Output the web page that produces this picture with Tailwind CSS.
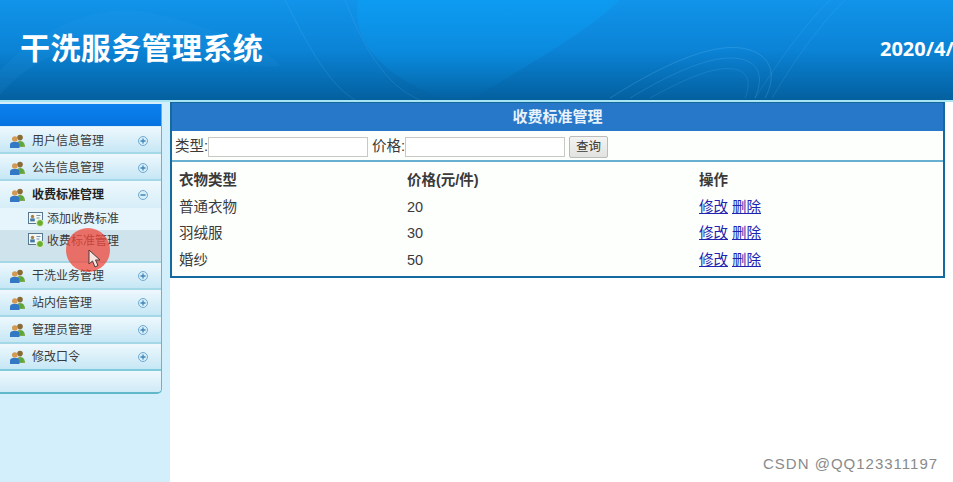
<!DOCTYPE html>
<html lang="zh-CN">
<head>
  <meta charset="UTF-8">
  <title>干洗服务管理系统</title>
  <script src="https://cdn.jsdelivr.net/npm/@tailwindcss/browser@4"></script>
</head>
<body class="relative w-[953px] h-[482px] overflow-hidden bg-white font-['Liberation_Sans','Noto_Sans_CJK_SC',sans-serif] text-[#3a3a3a]">

  <!-- Header -->
  <header class="relative h-[102px] border-b-2 border-[#a8e4f2] bg-gradient-to-b from-[#1194ea] via-[#0b83d6] to-[#04609f] overflow-hidden">
    <svg class="absolute inset-0" width="953" height="100" fill="none">
      <defs>
        <linearGradient id="glow" x1="0" y1="0" x2="0" y2="1"><stop offset="0" stop-color="#09a0f5" stop-opacity=".55"/><stop offset="1" stop-color="#09a0f5" stop-opacity="0"/></linearGradient>
      </defs>
      <path d="M358 0 L 620 0 C 590 30 520 70 470 100 L 445 100 C 395 80 350 50 358 0 Z" fill="url(#glow)"/>
      <path d="M0 70 C 50 20 110 0 160 15 C 220 30 270 50 280 66 C 240 70 170 50 120 45 C 70 42 30 60 0 95 Z" fill="#3aa9ee" opacity=".1"/>
      <path d="M285 0 C 310 50 330 85 355 100" stroke="#7cc8f5" stroke-opacity=".16"/>
      <path d="M345 0 C 365 50 385 85 420 100" stroke="#7cc8f5" stroke-opacity=".14"/>
      <path d="M610 98 C 670 60 720 40 750 50 C 775 58 775 80 765 98" stroke="#7cc8f5" stroke-opacity=".22"/>
      <path d="M630 98 C 680 68 720 52 745 60 C 762 66 762 82 755 98" stroke="#7cc8f5" stroke-opacity=".18"/>
      <path d="M650 98 C 690 76 720 64 738 70 C 750 74 750 86 745 98" stroke="#7cc8f5" stroke-opacity=".15"/>
      <path d="M755 98 C 780 60 800 30 830 0" stroke="#7cc8f5" stroke-opacity=".14"/>
      <path d="M772 98 C 795 60 815 30 845 0" stroke="#7cc8f5" stroke-opacity=".14"/>
    </svg>
    <div class="relative flex items-center justify-between h-[100px] pb-[3px] pl-[20px]">
      <h1 class="text-[30px] font-bold leading-none tracking-[0.4px] text-white">干洗服务管理系统</h1>
      <span class="w-[73px] overflow-hidden whitespace-nowrap font-['Open_Sans'] text-[20px] font-bold text-white">2020/4/</span>
    </div>
  </header>

  <div class="flex h-[380px]">
    <!-- Sidebar -->
    <aside class="w-[170px] shrink-0 bg-[#d2effb] pt-[2px] pr-[8px]">
      <div class="rounded-br-[5px] border-r border-b-2 border-[#5fb9cb] bg-[#d8f0fa] overflow-hidden">
        <div class="h-[22px] bg-gradient-to-b from-[#0a80ee] to-[#0674e0]"></div>

        <div class="flex h-[27px] items-center justify-between pl-[10px] pr-[13px] pt-[3px] border-b-2 border-[#a5d8e6] bg-gradient-to-b from-[#eef8fd] to-[#c6e7f5] text-[12px] mt-px">
          <span class="flex items-center gap-[7px]">
            <svg width="15" height="14" viewBox="0 0 15 14"><circle cx="10" cy="3.6" r="2.8" fill="#8a6a35"/><path d="M6 13 C6 8 8 7 10 7 C12 7 15 8 15 13Z" fill="#7fa850"/><circle cx="4.8" cy="5" r="2.8" fill="#d29a55"/><path d="M0 14 V10.5 C0 8.5 2 8 4.8 8 C7.5 8 9.5 8.5 9.5 10.5 V14Z" fill="#3378c4"/><circle cx="11.5" cy="10" r="2.2" fill="#5aa83a"/></svg>
            用户信息管理
          </span>
          <svg width="10" height="10" viewBox="0 0 10 10"><circle cx="5" cy="5" r="4.5" fill="#d6eef8" stroke="#6fa9cf"/><path d="M2.5 5h5M5 2.5v5" stroke="#3f86b8" stroke-width="1.3"/></svg>
        </div>
        <div class="flex h-[27px] items-center justify-between pl-[10px] pr-[13px] pt-[3px] border-b-2 border-[#a5d8e6] bg-gradient-to-b from-[#eef8fd] to-[#c6e7f5] text-[12px]">
          <span class="flex items-center gap-[7px]">
            <svg width="15" height="14" viewBox="0 0 15 14"><circle cx="10" cy="3.6" r="2.8" fill="#8a6a35"/><path d="M6 13 C6 8 8 7 10 7 C12 7 15 8 15 13Z" fill="#7fa850"/><circle cx="4.8" cy="5" r="2.8" fill="#d29a55"/><path d="M0 14 V10.5 C0 8.5 2 8 4.8 8 C7.5 8 9.5 8.5 9.5 10.5 V14Z" fill="#3378c4"/><circle cx="11.5" cy="10" r="2.2" fill="#5aa83a"/></svg>
            公告信息管理
          </span>
          <svg width="10" height="10" viewBox="0 0 10 10"><circle cx="5" cy="5" r="4.5" fill="#d6eef8" stroke="#6fa9cf"/><path d="M2.5 5h5M5 2.5v5" stroke="#3f86b8" stroke-width="1.3"/></svg>
        </div>
        <div class="flex h-[27px] items-center justify-between pl-[10px] pr-[13px] bg-gradient-to-b from-[#eef8fd] to-[#d6eef8] text-[12px] font-bold text-[#222]">
          <span class="flex items-center gap-[7px]">
            <svg width="15" height="14" viewBox="0 0 15 14"><circle cx="10" cy="3.6" r="2.8" fill="#8a6a35"/><path d="M6 13 C6 8 8 7 10 7 C12 7 15 8 15 13Z" fill="#7fa850"/><circle cx="4.8" cy="5" r="2.8" fill="#d29a55"/><path d="M0 14 V10.5 C0 8.5 2 8 4.8 8 C7.5 8 9.5 8.5 9.5 10.5 V14Z" fill="#3378c4"/><circle cx="11.5" cy="10" r="2.2" fill="#5aa83a"/></svg>
            收费标准管理
          </span>
          <svg width="10" height="10" viewBox="0 0 10 10"><circle cx="5" cy="5" r="4.5" fill="#d6eef8" stroke="#6fa9cf"/><path d="M2.5 5h5" stroke="#3f86b8" stroke-width="1.3"/></svg>
        </div>

        <!-- Sub menu -->
        <div class="flex h-[22px] items-center gap-[3px] pl-[28px] bg-[#e6f5fb] text-[12px]">
          <svg width="16" height="15" viewBox="0 0 16 15"><rect x=".5" y=".5" width="14" height="11" fill="#f2f7fa" stroke="#58788f"/><circle cx="4.5" cy="4.5" r="1.7" fill="#a9803f"/><rect x="2.2" y="6.4" width="4.6" height="3" fill="#4279a8"/><path d="M8.5 3.5h4M8.5 6h3" stroke="#7792a6"/><circle cx="12" cy="11" r="3.5" fill="#6aae2e" stroke="#e8f5d8"/></svg>
          添加收费标准
        </div>
        <div class="flex h-[33px] items-start gap-[3px] pl-[28px] pt-[2px] bg-[#cfe3ec] text-[12px] border-b-2 border-[#a5d8e6]">
          <svg width="16" height="15" viewBox="0 0 16 15" class="mt-[1px]"><rect x=".5" y=".5" width="14" height="11" fill="#f2f7fa" stroke="#58788f"/><circle cx="4.5" cy="4.5" r="1.7" fill="#a9803f"/><rect x="2.2" y="6.4" width="4.6" height="3" fill="#4279a8"/><path d="M8.5 3.5h4M8.5 6h3" stroke="#7792a6"/><circle cx="12" cy="11" r="3.5" fill="#6aae2e" stroke="#e8f5d8"/></svg>
          收费标准管理
        </div>

        <div class="flex h-[27px] items-center justify-between pl-[10px] pr-[13px] border-b-2 border-[#a5d8e6] bg-gradient-to-b from-[#eef8fd] to-[#c6e7f5] text-[12px]">
          <span class="flex items-center gap-[7px]">
            <svg width="15" height="14" viewBox="0 0 15 14"><circle cx="10" cy="3.6" r="2.8" fill="#8a6a35"/><path d="M6 13 C6 8 8 7 10 7 C12 7 15 8 15 13Z" fill="#7fa850"/><circle cx="4.8" cy="5" r="2.8" fill="#d29a55"/><path d="M0 14 V10.5 C0 8.5 2 8 4.8 8 C7.5 8 9.5 8.5 9.5 10.5 V14Z" fill="#3378c4"/><circle cx="11.5" cy="10" r="2.2" fill="#5aa83a"/></svg>
            干洗业务管理
          </span>
          <svg width="10" height="10" viewBox="0 0 10 10"><circle cx="5" cy="5" r="4.5" fill="#d6eef8" stroke="#6fa9cf"/><path d="M2.5 5h5M5 2.5v5" stroke="#3f86b8" stroke-width="1.3"/></svg>
        </div>
        <div class="flex h-[27px] items-center justify-between pl-[10px] pr-[13px] border-b-2 border-[#a5d8e6] bg-gradient-to-b from-[#eef8fd] to-[#c6e7f5] text-[12px]">
          <span class="flex items-center gap-[7px]">
            <svg width="15" height="14" viewBox="0 0 15 14"><circle cx="10" cy="3.6" r="2.8" fill="#8a6a35"/><path d="M6 13 C6 8 8 7 10 7 C12 7 15 8 15 13Z" fill="#7fa850"/><circle cx="4.8" cy="5" r="2.8" fill="#d29a55"/><path d="M0 14 V10.5 C0 8.5 2 8 4.8 8 C7.5 8 9.5 8.5 9.5 10.5 V14Z" fill="#3378c4"/><circle cx="11.5" cy="10" r="2.2" fill="#5aa83a"/></svg>
            站内信管理
          </span>
          <svg width="10" height="10" viewBox="0 0 10 10"><circle cx="5" cy="5" r="4.5" fill="#d6eef8" stroke="#6fa9cf"/><path d="M2.5 5h5M5 2.5v5" stroke="#3f86b8" stroke-width="1.3"/></svg>
        </div>
        <div class="flex h-[27px] items-center justify-between pl-[10px] pr-[13px] border-b-2 border-[#a5d8e6] bg-gradient-to-b from-[#eef8fd] to-[#c6e7f5] text-[12px]">
          <span class="flex items-center gap-[7px]">
            <svg width="15" height="14" viewBox="0 0 15 14"><circle cx="10" cy="3.6" r="2.8" fill="#8a6a35"/><path d="M6 13 C6 8 8 7 10 7 C12 7 15 8 15 13Z" fill="#7fa850"/><circle cx="4.8" cy="5" r="2.8" fill="#d29a55"/><path d="M0 14 V10.5 C0 8.5 2 8 4.8 8 C7.5 8 9.5 8.5 9.5 10.5 V14Z" fill="#3378c4"/><circle cx="11.5" cy="10" r="2.2" fill="#5aa83a"/></svg>
            管理员管理
          </span>
          <svg width="10" height="10" viewBox="0 0 10 10"><circle cx="5" cy="5" r="4.5" fill="#d6eef8" stroke="#6fa9cf"/><path d="M2.5 5h5M5 2.5v5" stroke="#3f86b8" stroke-width="1.3"/></svg>
        </div>
        <div class="flex h-[27px] items-center justify-between pl-[10px] pr-[13px] border-b-2 border-[#7fcbd9] bg-gradient-to-b from-[#eef8fd] to-[#c6e7f5] text-[12px]">
          <span class="flex items-center gap-[7px]">
            <svg width="15" height="14" viewBox="0 0 15 14"><circle cx="10" cy="3.6" r="2.8" fill="#8a6a35"/><path d="M6 13 C6 8 8 7 10 7 C12 7 15 8 15 13Z" fill="#7fa850"/><circle cx="4.8" cy="5" r="2.8" fill="#d29a55"/><path d="M0 14 V10.5 C0 8.5 2 8 4.8 8 C7.5 8 9.5 8.5 9.5 10.5 V14Z" fill="#3378c4"/><circle cx="11.5" cy="10" r="2.2" fill="#5aa83a"/></svg>
            修改口令
          </span>
          <svg width="10" height="10" viewBox="0 0 10 10"><circle cx="5" cy="5" r="4.5" fill="#d6eef8" stroke="#6fa9cf"/><path d="M2.5 5h5M5 2.5v5" stroke="#3f86b8" stroke-width="1.3"/></svg>
        </div>
        <div class="h-[21px] bg-gradient-to-b from-[#eef8fd] to-[#cfeaf6]"></div>
      </div>
    </aside>

    <!-- Main -->
    <main class="flex-1 bg-white">
      <div class="w-[775px] border-x-2 border-b-2 border-[#14699f] border-t border-t-[#14699f] bg-[#fdfffd] text-[14.5px]">
        <div class="h-[28px] bg-[#2878c9] text-center text-[15px] font-bold leading-[28px] text-[#e8f2fb]">收费标准管理</div>
        <form class="flex h-[31px] items-center border-b-2 border-[#69afd0] pl-[3px] pt-[3px]">
          <label>类型:</label>
          <input type="text" class="h-[20px] w-[160px] border border-[#c8c8c4] bg-white">
          <label class="ml-[4px]">价格:</label>
          <input type="text" class="h-[20px] w-[160px] border border-[#c8c8c4] bg-white">
          <button type="button" class="ml-[4px] h-[22px] w-[39px] rounded-[2px] border border-[#bbb] bg-gradient-to-b from-[#f4f4f2] to-[#e2e2e0] text-[12.5px] leading-none">查询</button>
        </form>
        <div class="grid grid-cols-[228px_292px_1fr] auto-rows-[26.5px] items-center pl-[7px] pt-[6px] pb-[2px]">
          <div class="font-bold">衣物类型</div><div class="font-bold">价格(元/件)</div><div class="font-bold">操作</div>
          <div>普通衣物</div><div>20</div><div class="flex gap-[4px] text-[#2222b0] underline"><a href="#">修改</a><a href="#">删除</a></div>
          <div>羽绒服</div><div>30</div><div class="flex gap-[4px] text-[#2222b0] underline"><a href="#">修改</a><a href="#">删除</a></div>
          <div>婚纱</div><div>50</div><div class="flex gap-[4px] text-[#2222b0] underline"><a href="#">修改</a><a href="#">删除</a></div>
        </div>
      </div>
    </main>
  </div>

  <!-- Recording cursor highlight -->
  <div class="absolute left-[66px] top-[228px] h-[44px] w-[44px] rounded-full bg-[#f0483c]/75"></div>
  <svg class="absolute left-[88px] top-[249px]" width="14" height="19" viewBox="0 0 14 19"><path d="M1 1 V15 L4.5 12 L7 18 L10 16.5 L7.5 11 H12 Z" fill="#f6e4e0" stroke="#4a3a3a"/></svg>

  <!-- Watermark -->
  <div class="absolute left-[763px] top-[455px] text-[15px] leading-[18px] tracking-[1px] text-[#8a8a8a]">CSDN @QQ123311197</div>
</body>
</html>
